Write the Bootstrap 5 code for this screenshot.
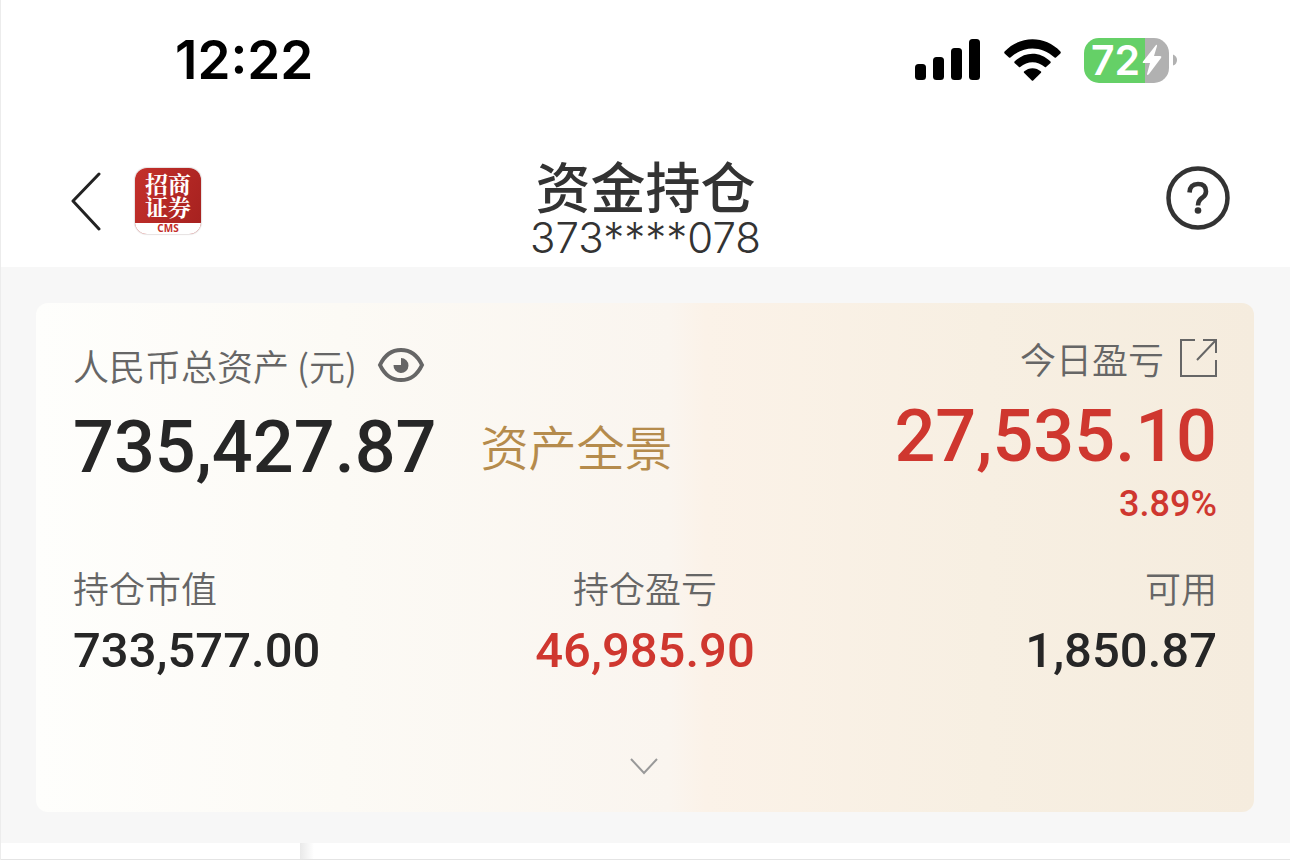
<!DOCTYPE html>
<html lang="zh-CN">
<head>
<meta charset="utf-8">
<meta name="viewport" content="width=device-width, initial-scale=1">
<title>资金持仓</title>
<link href="https://cdn.jsdelivr.net/npm/bootstrap@5.3.0/dist/css/bootstrap.min.css" rel="stylesheet">
<style>
body{font-family:"Noto Sans CJK SC",sans-serif;background:#fff;color:#262626;min-height:100vh;border-left:1px solid #ececec}
.status{height:124px;padding:0 113px 4px 174px}
.status-icons{gap:23px}
.clock{font:600 53px/60px Inter,sans-serif;color:#000}
.batt-wrap{width:93px;height:45px}
.batt{width:85px;height:45px;border-radius:15px;background:linear-gradient(90deg,#65d067 61px,#b1b1b1 61px)}
.batt-num{font:600 41px/45px Inter,sans-serif;color:#fff;padding:0 2px 0 7px}
.topbar{height:143px;padding:11px 60px 0}
.side{flex:1 1 0;gap:34px}
.back{margin-left:9px}
.help{margin-bottom:6px}
.plain{border:0;background:none;padding:0;line-height:0;color:inherit}
.app{width:66px;height:66px;border-radius:12px;background:linear-gradient(115deg,#c4302b,#a5211f);box-shadow:0 0 1px 1px #e6e2e2;overflow:hidden;color:#fff}
.app-name{font:700 23px/23px "Noto Serif CJK SC","Noto Sans CJK SC",serif;padding-top:4px;height:55px}
.app-tag{font:700 10px/11px "Noto Sans",sans-serif;color:#c4302b;background:#fff}
.heading{padding-top:7px}
.title{font-size:55px;line-height:66px;font-weight:500;color:#333}
.account{font:300 42px/42px Inter,sans-serif;color:#333}
.panel{background:#f7f7f7;padding:36px 36px 31px 35px}
.asset{border-radius:12px;padding:33px 37px 31px;background:linear-gradient(90deg,#fefefc 0%,#fcfaf5 25%,#faf5ef 52%,#fbf2e8 55%,#f7efe2 78%,#f5ecde 100%)}
.lbl{font-size:36px;line-height:44px;font-weight:350;color:#666}
.eye{margin-left:20px}
.fig{font-family:Roboto,sans-serif;font-weight:500}
.fig-lg{font-size:72px;line-height:80px}
.fig-md{font-size:49px;line-height:56px}
.fig-sm{font-size:36px;line-height:40px}
.up{color:#cf372f}
.pan{font-size:48px;line-height:56px;font-weight:350;color:#b58b4c;text-decoration:none;margin-left:44px;padding-bottom:6px}
.total{padding-top:7px}
.gap-a{margin-top:21px}
.gap-b{margin-top:17px}
.gap-c{margin-top:7px}
.gap-d{margin-top:14px}
.details{margin-top:41px}
.more{margin-top:72px}
.tabs{min-height:17px;border-bottom:1px solid #e4e4e4}
.tab-on{width:299px}
.tab-rest{background:linear-gradient(90deg,#e9e9e9,#fff 14px)}
</style>
</head>
<body>
<header>
  <div class="status d-flex align-items-center justify-content-between">
    <span class="clock">12:22</span>
    <div class="status-icons d-flex align-items-center">
      <svg width="66" height="42" viewBox="0 0 66 42" aria-hidden="true"><rect y="25" width="11" height="16" rx="3.500"/><rect x="18" y="18" width="11" height="23" rx="3.500"/><rect x="36" y="9" width="11" height="32" rx="3.500"/><rect x="54" width="11" height="41" rx="3.500"/></svg>
      <svg width="57" height="42" viewBox="0 0 57 42" aria-hidden="true"><path d="M.6 12.500C16-3.800 41-3.800 56.400 12.500Q57.200 13.500 56.400 14.400L52 18.500Q51.300 19 50.600 18.500C37 6.500 20 6.500 6.400 18.500Q5.700 19 5 18.500L.6 14.400Q-.2 13.500 .6 12.500Z"/><path d="M10.500 22.500C21 12 36 12 46.500 22.500Q47 23.300 46.500 24L42 28Q41.500 28.500 40.800 28C33.500 21.500 23.500 21.500 16.200 28Q15.500 28.500 15 28L10.500 24Q10 23.300 10.500 22.500Z"/><path d="M20 32.500C25 28 32 28 37 32.500Q37.500 33 37 33.700L29.200 41.400Q28.500 42 27.800 41.400L20 33.700Q19.500 33 20 32.500Z"/></svg>
      <div class="batt-wrap d-flex align-items-center">
        <div class="batt d-flex align-items-center flex-shrink-0"><span class="batt-num">72</span><svg width="20" height="32" viewBox="0 0 20 32" aria-hidden="true"><path fill="#fff" d="M14 1 1 17.500Q0 19 2 19H8L5 30Q5 32 7 30L19 14Q20 12 18 12H12L15 2Q15 0 14 1Z"/></svg></div>
        <svg class="ms-1" width="5" height="14" viewBox="0 0 5 14" aria-hidden="true"><path fill="#b1b1b1" d="M0 0Q5 2 5 7T0 14Z"/></svg>
      </div>
    </div>
  </div>
  <nav class="topbar d-flex align-items-center">
    <div class="side d-flex align-items-center">
      <button class="plain back" type="button" aria-label="返回"><svg width="31" height="60" viewBox="0 0 31 60"><path d="M29 3 3 30 29 58" fill="none" stroke="#222" stroke-width="3" stroke-linecap="round" stroke-linejoin="round"/></svg></button>
      <div class="app text-center"><div class="app-name">招商<br>证券</div><div class="app-tag">CMS</div></div>
    </div>
    <div class="heading text-center">
      <h1 class="title m-0">资金持仓</h1>
      <div class="account">373****078</div>
    </div>
    <div class="side text-end">
      <button class="plain help" type="button" aria-label="帮助"><svg width="64" height="64" viewBox="0 0 64 64" fill="none" stroke="#333"><circle cx="32" cy="32" r="29.500" stroke-width="4.500"/><path d="M23.500 26.500Q24 18 32 18Q40 18 40 25.500Q40 29 36.500 31.500Q32 34.500 32 39.500" stroke-width="4.600"/><circle cx="32" cy="44.500" r="3.300" fill="#333" stroke="none"/></svg></button>
    </div>
  </nav>
</header>
<main>
  <div class="panel">
    <section class="asset">
      <div class="d-flex justify-content-between">
        <div class="total">
          <div class="lbl d-flex align-items-center">人民币总资产 (元)
            <button class="plain eye" type="button" aria-label="隐藏金额"><svg width="48" height="36" viewBox="0 0 48 36"><path d="M3 18Q10 3 24 3T45 18Q38 33 24 33T3 18Z" fill="none" stroke="#666" stroke-width="4"/><path d="M24 18V11A7.500 7.500 0 1 1 16.500 18Z" fill="#666"/></svg></button>
          </div>
          <div class="gap-a d-flex align-items-center">
            <span class="fig fig-lg">735,427.87</span>
            <a class="pan" href="#">资产全景</a>
          </div>
        </div>
        <div class="text-end up">
          <div class="lbl d-flex align-items-center justify-content-end">今日盈亏
            <button class="plain ms-3" type="button" aria-label="查看今日盈亏"><svg width="37" height="38" viewBox="0 0 37 38" fill="none" stroke="#666" stroke-width="2"><path d="M15 1H1V37H36V21M23 1H36V14M36 1 17 21"/></svg></button>
          </div>
          <div class="gap-b fig fig-lg">27,535.10</div>
          <div class="gap-c fig fig-sm">3.89%</div>
        </div>
      </div>
      <div class="details row gx-0">
        <div class="col"><div class="lbl">持仓市值</div><div class="gap-d fig fig-md">733,577.00</div></div>
        <div class="col text-center"><div class="lbl">持仓盈亏</div><div class="gap-d fig fig-md up">46,985.90</div></div>
        <div class="col text-end"><div class="lbl">可用</div><div class="gap-d fig fig-md">1,850.87</div></div>
      </div>
      <div class="more text-center"><button class="plain" type="button" aria-label="展开"><svg width="30" height="30" viewBox="0 0 30 30"><path d="M1 8 14 22 27 8" fill="none" stroke="#999" stroke-width="2"/></svg></button></div>
    </section>
  </div>
  <div class="tabs d-flex"><div class="tab-on"></div><div class="tab-rest flex-fill"></div></div>
</main>
<script src="https://cdn.jsdelivr.net/npm/bootstrap@5.3.0/dist/js/bootstrap.bundle.min.js"></script>
</body>
</html>
